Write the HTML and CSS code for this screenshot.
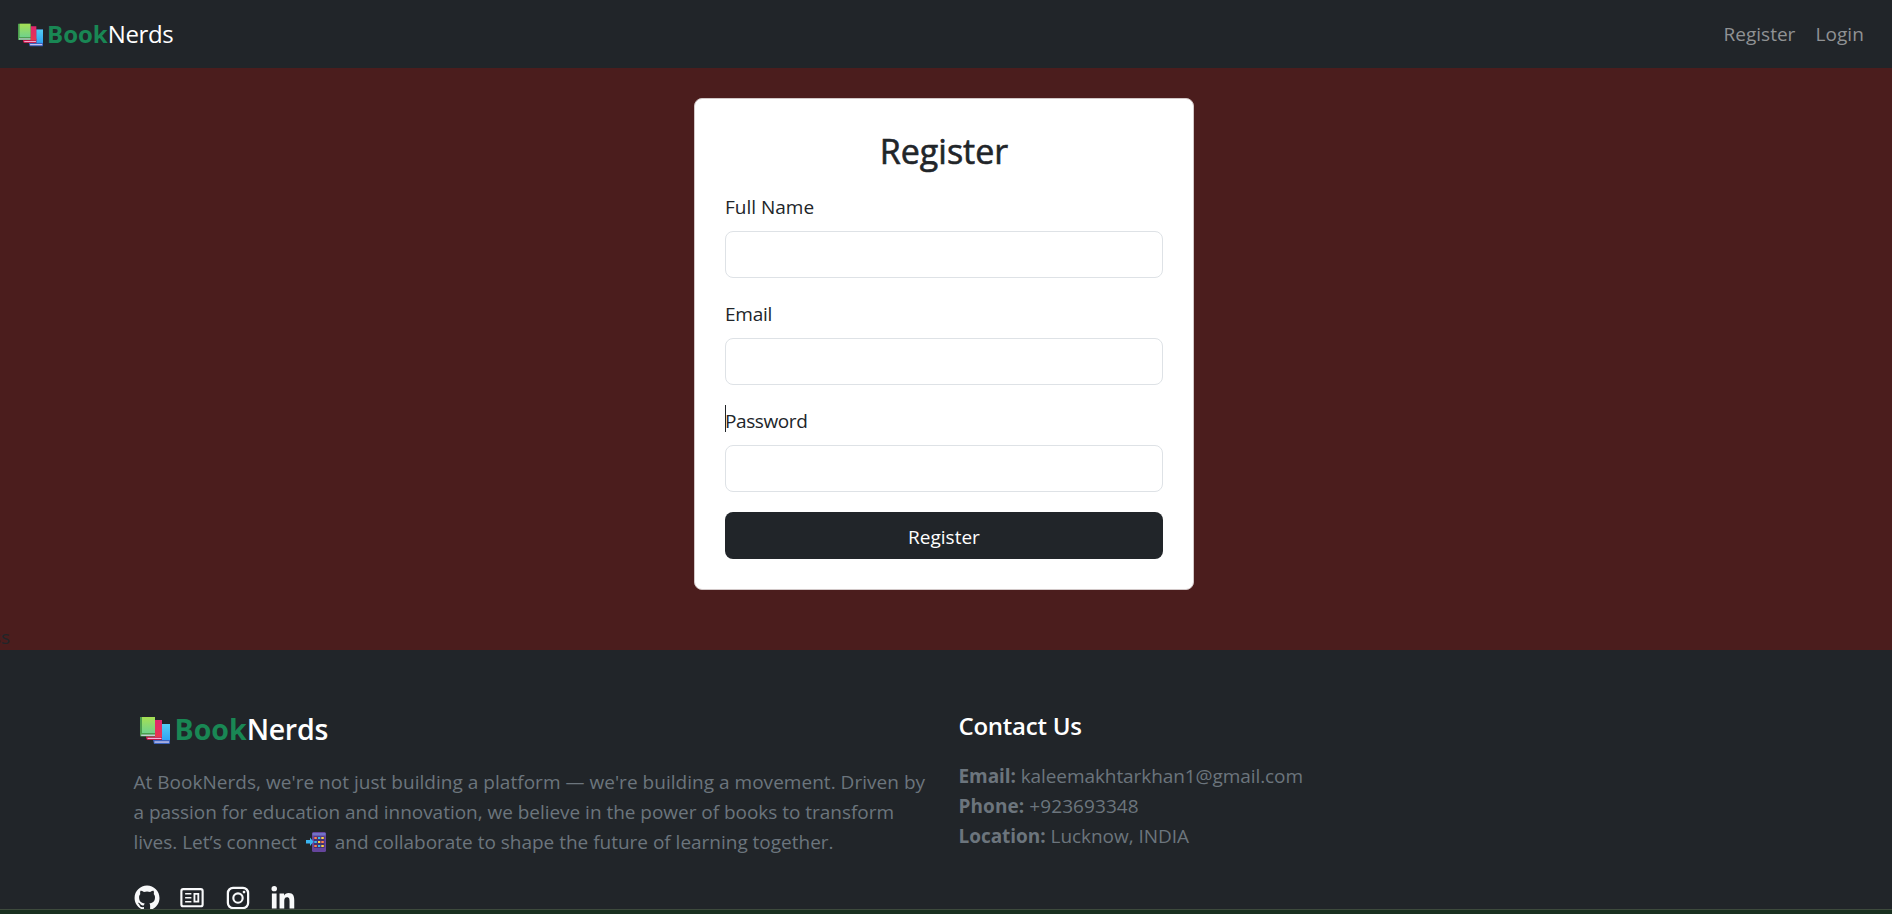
FILE: index.html
```html
<!DOCTYPE html>
<html lang="en">
<head>
<meta charset="utf-8">
<title>BookNerds - Register</title>
<link rel="stylesheet" href="styles.css">
</head>
<body>
<svg width="0" height="0" class="defs" aria-hidden="true">
  <defs>
    <linearGradient id="green" x1="0" y1="0" x2="0" y2="1"><stop offset="0" stop-color="#a6e052"/><stop offset="1" stop-color="#70d28c"/></linearGradient>
    <linearGradient id="red" x1="0" y1="0" x2="0" y2="1"><stop offset="0" stop-color="#e0266f"/><stop offset="1" stop-color="#e8384f"/></linearGradient>
    <linearGradient id="blue" x1="0" y1="0" x2="0" y2="1"><stop offset="0" stop-color="#54cdf3"/><stop offset="1" stop-color="#30a4f4"/></linearGradient>
    <symbol id="books" viewBox="0 0 30 27">
      <path d="M12 7h10v15H12z" fill="#b5163f"/><path d="M20 7h10v19a1 1 0 0 1-1 1H14l-1-4 7-2z" fill="#3b63bd"/>
      <path d="M22 7h8v16h-8z" fill="url(#blue)"/><path d="M14.5 24.4H29v1.3H14.5z" fill="#d5cdf1"/>
      <path d="M6 18h16v5H7l-1-2z" fill="#bd1747"/><path d="M15 3h7v17h-7z" fill="url(#red)"/><path d="M7.500 20.800H21.500v1.200H7.500z" fill="#f0b8da"/>
      <path d="M0 0h15v19.500H1a1 1 0 0 1-1-1z" fill="#4b9d4d"/><path d="M2 0h13v16H2z" fill="url(#green)"/><path d="M1.200 17.600H15v1.300H1.200z" fill="#cfd5e5"/>
    </symbol>
  </defs>
</svg>

<nav class="navbar">
  <a class="brand" href="#"><svg class="brand-icon"><use href="#books"/></svg><span class="brand-book">Book</span><span class="brand-nerds">Nerds</span></a>
  <div class="nav-links"><a class="nav-register" href="#">Register</a><a class="nav-login" href="#">Login</a></div>
</nav>

<main class="page">
  <form class="card">
    <h1 class="card-title"><span>Register</span></h1>
    <label class="label" for="name">Full Name</label>
    <input class="input" id="name" type="text">
    <label class="label label-email" for="email">Email</label>
    <input class="input" id="email" type="email">
    <label class="label label-active" for="password">Password</label>
    <input class="input" id="password" type="password">
    <button class="submit" type="button">Register</button>
  </form>
  <div class="stray">ss</div>
</main>

<footer class="footer">
  <section class="about">
    <a class="footer-brand" href="#"><svg class="footer-brand-icon"><use href="#books"/></svg><span class="footer-book">Book</span><span class="footer-nerds">Nerds</span></a>
    <p class="about-text"><span class="line line-1">At BookNerds, we're not just building a platform — we're building a movement. Driven by</span>
      <span class="line line-2">a passion for education and innovation, we believe in the power of books to transform</span>
      <span class="line line-3">lives. Let’s connect <svg class="phone" viewBox="0 0 20 20"><rect x="6" width="14" height="20" rx="1.500" fill="#65459c"/><path d="M6.500 1h13v2.500h-13z" fill="#7173c7"/><path d="M8 4.500h10.500v11.500H8z" fill="#443270"/><path d="M0 8h4V5.500L7.500 9.800 4 14v-2.500H0z" fill="#3ab5f2"/><path d="M8.300 5h2.500v2H8.300zm7 4h2.500v2h-2.500zm-7 4h2.500v2H8.300z" fill="#ff824a"/><path d="M12 5h2.300v2H12zM8.300 9h2.500v2H8.300zM12 13h2.300v2H12z" fill="#37b8ef"/><path d="M15.300 5h2.500v2h-2.500zM12 9h2.300v2H12zm3.300 4h2.500v2h-2.500z" fill="#ffd343"/></svg> and collaborate to shape the future of learning together.</span></p>
    <div class="socials">
      <svg viewBox="0 0 24 24"><path fill-rule="evenodd" d="M12.026 2c-5.509 0-9.974 4.465-9.974 9.974 0 4.406 2.857 8.145 6.821 9.465.499.090.679-.217.679-.481 0-.237-.008-.865-.011-1.696-2.775.602-3.361-1.338-3.361-1.338-.452-1.152-1.107-1.459-1.107-1.459-.905-.619.069-.605.069-.605 1.002.070 1.527 1.028 1.527 1.028.890 1.524 2.336 1.084 2.902.829.091-.645.351-1.085.635-1.334-2.214-.251-4.542-1.107-4.542-4.930 0-1.087.389-1.979 1.024-2.675-.101-.253-.446-1.268.099-2.640 0 0 .837-.269 2.742 1.021a9.582 9.582 0 0 1 2.496-.336 9.554 9.554 0 0 1 2.496.336c1.906-1.291 2.742-1.021 2.742-1.021.545 1.372.203 2.387.099 2.640.640.696 1.024 1.587 1.024 2.675 0 3.833-2.330 4.675-4.552 4.922.355.308.675.916.675 1.846 0 1.334-.012 2.410-.012 2.737 0 .267.178.577.687.479C19.146 20.115 22 16.379 22 11.974 22 6.465 17.535 2 12.026 2z"/></svg>
      <svg viewBox="0 0 24 24"><rect x="3.500" y="4.900" width="17" height="13.700" rx="1.500" fill="none" stroke="#f8f9fa" stroke-width="1.700"/><path fill-rule="evenodd" d="M6.500 7.900h5v1.300h-5zm0 3.200h5v1.300h-5zm0 3.200h5v1.300h-5zM13.200 7.900h4.600v7.700h-4.600zm1.500 1.500v4.700h1.600V9.400z"/></svg>
      <svg viewBox="0 0 24 24"><path fill-rule="evenodd" d="M8 3h8a5 5 0 0 1 5 5v8a5 5 0 0 1-5 5H8a5 5 0 0 1-5-5V8a5 5 0 0 1 5-5zm.2 1.800A3.400 3.400 0 0 0 4.800 8.200v7.600a3.400 3.400 0 0 0 3.400 3.400h7.600a3.400 3.400 0 0 0 3.400-3.400V8.200a3.400 3.400 0 0 0-3.400-3.400zM12 7.400a4.600 4.600 0 1 1 0 9.200 4.600 4.600 0 0 1 0-9.200zm0 1.700a2.900 2.900 0 1 0 0 5.800 2.900 2.900 0 0 0 0-5.800z"/><circle cx="16.800" cy="7.200" r="1.100"/></svg>
      <svg viewBox="0 0 24 24"><circle cx="4.983" cy="4.500" r="2.188"/><path d="M9.237 8.355v12.139h3.769v-6.003c0-1.584.298-3.118 2.262-3.118 1.937 0 1.961 1.811 1.961 3.218v5.904H21v-6.657c0-3.270-.704-5.783-4.526-5.783-1.835 0-3.065 1.007-3.568 1.960h-.051v-1.660H9.237zm-6.142 0H6.870v12.139H3.095z"/></svg>
    </div>
  </section>
  <section class="contact">
    <h2 class="contact-title">Contact Us</h2>
    <div class="contact-line contact-email"><b>Email:</b> <span>kaleemakhtarkhan1@gmail.com</span></div>
    <div class="contact-line contact-phone"><b>Phone:</b> <span>+923693348</span></div>
    <div class="contact-line contact-place"><b>Location:</b> <span>Lucknow, INDIA</span></div>
  </section>
</footer>
<div class="bottom-edge"></div>
</body>
</html>
```
FILE: styles.css
```css
* { box-sizing: border-box; }
body {
  margin: 0;
  height: 914px;
  overflow: hidden;
  display: flex;
  flex-direction: column;
  background: #212529;
  color: #212529;
  font: 400 19px/30px "Open Sans", "Noto Sans", sans-serif;
}
a { color: inherit; text-decoration: none; }
.defs { position: absolute; }
.navbar {
  height: 68px;
  flex: none;
  display: flex;
  align-items: center;
  justify-content: space-between;
  padding: 0 28px 0 18px;
}
.brand, .footer-brand { display: flex; align-items: center; color: #fff; }
.brand { font-size: 24px; }
.brand-icon { width: 25px; height: 24px; margin: 2px 4px 0 0; }
.brand-nerds { letter-spacing: -0.35px; }
.brand-book, .footer-book { color: #198754; font-weight: 700; }
.nav-links { display: flex; gap: 20px; color: #909294; }
.nav-login { letter-spacing: 0.1px; }
.page {
  height: 582px;
  flex: none;
  padding-top: 30px;
  background: #4b1d1d;
}
.card {
  width: 500px;
  height: 492px;
  margin: 0 auto 0 694px;
  padding: 30px;
  border: 1px solid #d2c8c8;
  border-radius: 8px;
  background: #fff;
}
.card-title {
  margin: 1px 0 19px;
  font-size: 34px;
  font-weight: 400;
  -webkit-text-stroke: 0.6px #212529;
  line-height: 42px;
  text-align: center;
}
.label { display: block; margin-bottom: 10px; width: max-content; height: 30px; line-height: 32px; }
.label-email { letter-spacing: -0.25px; }
.label-active { position: relative; letter-spacing: -0.4px; }
.label-active::before {
  content: "";
  position: absolute;
  left: 0;
  top: 0;
  width: 1px;
  height: 27px;
  background: #212529;
}
.input {
  display: block;
  width: 438px;
  height: 47px;
  margin: 0 0 20px;
  padding: 7px 15px;
  border: 1px solid #dee2e6;
  border-radius: 8px;
  font: inherit;
}
.submit {
  display: block;
  width: 438px;
  height: 47px;
  padding: 3px 0 0;
  border: 0;
  border-radius: 8px;
  background: #212529;
  color: #fff;
  font: inherit;
}
.stray { margin: 32px 0 0 -8px; }
.footer {
  flex: 1;
  display: grid;
  grid-template-columns: 825px 1fr;
  padding: 60px 0 0 133.500px;
  color: #6c757d;
}
.footer-brand { height: 38px; margin: 0 0 19px 6px; font-size: 28.500px; }
.footer-brand-icon { width: 30px; height: 27px; margin: 2px 5px 0 0; }
.footer-nerds { font-weight: 600; letter-spacing: -0.25px; }
.about-text { margin: 0; }
.line { display: block; width: max-content; white-space: nowrap; }
.line-1 { letter-spacing: 0.028px; }
.line-2 { letter-spacing: -0.03px; }
.line-3 { letter-spacing: -0.015px; }
.phone { width: 20px; height: 20px; margin: 0 4px; vertical-align: -3px; }
.socials { display: flex; gap: 15.500px; margin: 26px 0 0 -2px; height: 30px; }
.socials svg { width: 30px; height: 30px; fill: #f8f9fa; }
.contact-title { margin: 1px 0 20px; color: #fff; font-size: 24px; font-weight: 600; line-height: 30px; letter-spacing: -0.25px; }
.contact-line { width: max-content; }
.contact-email { letter-spacing: -0.08px; }
.contact-phone { letter-spacing: 0.08px; }
.contact-place { letter-spacing: -0.04px; }
.bottom-edge {
  position: absolute;
  inset: 909px 0 0;
  border-top: 1px solid #3d4a3c;
  background: #19301f;
}
```
